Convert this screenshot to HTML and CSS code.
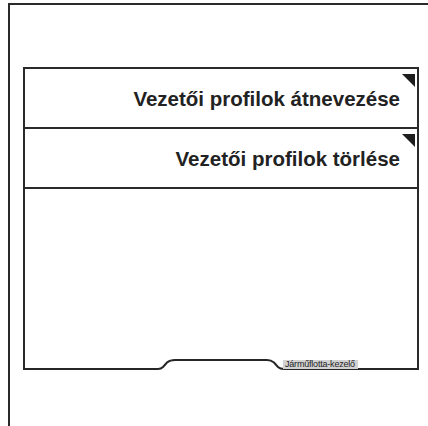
FILE: index.html
```html
<!DOCTYPE html>
<html>
  <head>
    <meta charset="UTF-8">
    <title>Vezetői profilok</title>
    <link rel="stylesheet" href="styles.css">
  </head>
  <body>
    <div class="frame">
      <div class="panel">
        <div class="row">
          <span class="row-text">Vezetői profilok átnevezése</span>
          <i class="corner"></i>
        </div>
        <div class="row">
          <span class="row-text">Vezetői profilok törlése</span>
          <i class="corner"></i>
        </div>
        <div class="fill"></div>
        <svg class="bottom" viewBox="0 0 392 12" width="392" height="12">
          <path d="M0 11 H133 Q136 11 138 9 L142 4.5 Q145 2 150 2 H242 Q246 2 249 4.5 L253 9 Q255 11 259 11 H392" fill="none" stroke="#262626" stroke-width="2" />
        </svg>
        <span class="tag">Járműflotta-kezelő</span>
      </div>
    </div>
  </body>
</html>
```

FILE: styles.css
```css
* {
  margin: 0;
  padding: 0;
  box-sizing: border-box;
}

html,
body {
  height: 100%;
  background: #fff;
  overflow: hidden;
}

.frame {
  margin: 3px 0 0 8px;
  height: calc(100% - 3px);
  border-top: 2px solid #2a2a2a;
  border-left: 2px solid #2a2a2a;
  padding: 62px 0 0 13px;
}

.panel {
  position: relative;
  display: flex;
  flex-direction: column;
  width: 396px;
  height: 303px;
  border: 2px solid #2a2a2a;
  border-bottom: none;
}

.row {
  position: relative;
  height: 60px;
  border-bottom: 2px solid #2a2a2a;
  padding: 18px 17px 0 0;
  text-align: right;
}

.row-text {
  font-family: "Liberation Sans", Arial, sans-serif;
  font-weight: bold;
  font-size: 20.5px;
  line-height: 24px;
  color: #222;
}

.corner {
  position: absolute;
  top: 5px;
  right: 2px;
  width: 13px;
  height: 13px;
  background: #1e1e1e;
  clip-path: polygon(0 0, 100% 0, 100% 100%);
}

.fill {
  flex: 1;
}

.bottom {
  display: block;
  flex: none;
}

/* kis címke a panel alján */
.tag {
  position: absolute;
  left: 258px;
  bottom: 1px;
  height: 9px;
  padding: 0 3px 0 2px;
  background: #d2d2d2;
  font-family: "Liberation Sans Narrow", "Liberation Sans", Arial, sans-serif;
  font-size: 9px;
  line-height: 9px;
  letter-spacing: -0.2px;
  color: #222;
  white-space: nowrap;
}
```
